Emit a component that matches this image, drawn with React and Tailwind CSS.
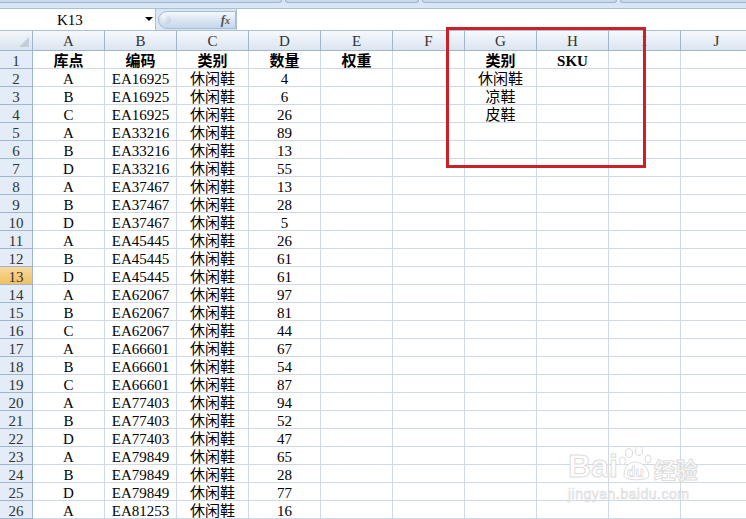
const rows = [
  ['A', 'EA16925', '休闲鞋', '4'],
  ['B', 'EA16925', '休闲鞋', '6'],
  ['C', 'EA16925', '休闲鞋', '26'],
  ['A', 'EA33216', '休闲鞋', '89'],
  ['B', 'EA33216', '休闲鞋', '13'],
  ['D', 'EA33216', '休闲鞋', '55'],
  ['A', 'EA37467', '休闲鞋', '13'],
  ['B', 'EA37467', '休闲鞋', '28'],
  ['D', 'EA37467', '休闲鞋', '5'],
  ['A', 'EA45445', '休闲鞋', '26'],
  ['B', 'EA45445', '休闲鞋', '61'],
  ['D', 'EA45445', '休闲鞋', '61'],
  ['A', 'EA62067', '休闲鞋', '97'],
  ['B', 'EA62067', '休闲鞋', '81'],
  ['C', 'EA62067', '休闲鞋', '44'],
  ['A', 'EA66601', '休闲鞋', '67'],
  ['B', 'EA66601', '休闲鞋', '54'],
  ['C', 'EA66601', '休闲鞋', '87'],
  ['A', 'EA77403', '休闲鞋', '94'],
  ['B', 'EA77403', '休闲鞋', '52'],
  ['D', 'EA77403', '休闲鞋', '47'],
  ['A', 'EA79849', '休闲鞋', '65'],
  ['B', 'EA79849', '休闲鞋', '28'],
  ['D', 'EA79849', '休闲鞋', '77'],
  ['A', 'EA81253', '休闲鞋', '16'],
]

const sideList = ['休闲鞋', '凉鞋', '皮鞋']
const cols = ['A', 'B', 'C', 'D', 'E', 'F', 'G', 'H', 'I', 'J']

function Cell({ children, bold }) {
  return (
    <div
      className={`h-[18px] pt-[3px] border-r border-b border-[#d0d7e5] flex items-center justify-center overflow-hidden whitespace-nowrap text-[15px] leading-none text-black ${bold ? 'font-bold' : ''}`}
    >
      {children}
    </div>
  )
}

function RowHead({ n }) {
  const sel = n === 13
  return (
    <div
      className={`h-[18px] pt-[3px] border-r border-b border-[#9eb6ce] flex items-center justify-center text-[15px] leading-none text-[#333] ${
        sel ? 'bg-gradient-to-b from-[#f9d99f] to-[#f1c15f]' : 'bg-[#e4ecf7]'
      }`}
    >
      {n}
    </div>
  )
}

function Row({ n, cells }) {
  const bold = n === 1
  return (
    <>
      <RowHead n={n} />
      {cells.map((v, j) => (
        <Cell key={j} bold={bold && v !== ''}>
          {v}
        </Cell>
      ))}
    </>
  )
}

export default function App() {
  const data = [
    ['库点', '编码', '类别', '数量', '权重', '', '类别', 'SKU', '', ''],
    ...rows.map((r, i) => [...r, '', '', sideList[i] || '', '', '', '']),
  ]

  return (
    <div
      className="relative w-[746px] h-[519px] overflow-hidden bg-white"
      style={{ fontFamily: '"Liberation Serif", "Noto Sans CJK SC", serif' }}
    >
      {/* ribbon bottom */}
      <div className="flex h-[9px] bg-[#dbe6f4] border-b border-[#a9bfd6]">
        <div className="flex w-full gap-[3px] h-[3px]">
          <div className="w-[282px] bg-[#c9d9ee] border-b border-r border-[#9db5d3] rounded-br-[3px]" />
          <div className="w-[134px] bg-[#c9d9ee] border-b border-x border-[#9db5d3] rounded-b-[3px]" />
          <div className="w-[195px] bg-[#c9d9ee] border-b border-x border-[#9db5d3] rounded-b-[3px]" />
          <div className="flex-1 bg-[#c9d9ee] border-b border-l border-[#9db5d3] rounded-bl-[3px]" />
        </div>
      </div>

      {/* formula bar */}
      <div className="flex h-[22px] bg-[#dbe6f4] border-b border-[#a9bfd6]">
        <div className="w-[156px] bg-white border-r border-[#a9bfd6] flex items-center relative">
          <span className="pl-[57px] pt-[2px] text-[15px] leading-none text-black">K13</span>
          <span className="absolute left-[145px] top-[8px] w-0 h-0 border-l-[4px] border-r-[4px] border-t-[4px] border-l-transparent border-r-transparent border-t-black" />
        </div>
        <div className="w-[80px] flex items-center pl-[2px]">
          <div className="relative w-full h-[18px] rounded-l-full bg-gradient-to-b from-[#f4f8fc] via-[#dbe6f3] to-[#c6d6ea] border border-[#a8bcd4] flex items-center justify-end pr-[5px]">
            <span className="absolute left-[3px] top-[3px] w-[9px] h-[9px] rounded-full bg-gradient-to-br from-[#ffffff] to-[#b7c8dc]" />
            <span className="text-[13px] italic font-bold text-[#555]">
              f<span className="text-[10px]">x</span>
            </span>
          </div>
        </div>
        <div className="flex-1 bg-white border-l border-[#a9bfd6]" />
      </div>

      {/* sheet grid */}
      <div className="grid grid-cols-[33px_repeat(10,72px)]">
        <div className="h-[20px] bg-gradient-to-b from-[#f4f7fb] to-[#d9e3ef] border-r border-b border-[#9eb6ce] relative">
          <span className="absolute right-[3px] bottom-[3px] w-0 h-0 border-b-[10px] border-l-[10px] border-b-[#c3cedc] border-l-transparent" />
        </div>
        {cols.map((c) => (
          <div
            key={c}
            className="h-[20px] pt-[2px] bg-gradient-to-b from-[#f6f9fc] to-[#dce5f0] border-r border-b border-[#9eb6ce] flex items-center justify-center text-[15px] leading-none text-[#333]"
          >
            {c}
          </div>
        ))}
        {data.map((r, i) => (
          <Row key={i} n={i + 1} cells={r} />
        ))}
      </div>

      {/* red highlight box */}
      <div className="absolute left-[446px] top-[27px] w-[200px] h-[141px] border-[3px] border-[#c92128]" />

      {/* watermark */}
      <div className="absolute left-[568px] top-[444px] w-[150px] pointer-events-none select-none" style={{ fontFamily: '"Liberation Sans", sans-serif' }}>
        <div className="flex items-end h-[38px]">
          <span className="text-[32px] font-bold leading-none text-white" style={{ WebkitTextStroke: '1px #dcdcdc' }}>Bai</span>
          <span className="relative w-[36px] h-[36px]">
            <svg width="36" height="36" viewBox="0 0 36 36" className="absolute left-0 top-0">
              <g fill="#fff" stroke="#dcdcdc" strokeWidth="1">
                <ellipse cx="11" cy="7" rx="3.5" ry="4.5" />
                <ellipse cx="21" cy="5" rx="3.5" ry="4.5" />
                <ellipse cx="4.5" cy="15" rx="3" ry="4" />
                <ellipse cx="30" cy="13" rx="3" ry="4" />
                <path d="M6 30 C6 20 12 16 17 16 C23 16 31 21 31 30 C31 35 6 35 6 30 Z" />
              </g>
            </svg>
            <span className="absolute left-[9px] top-[19px] text-[14px] font-bold leading-none text-white" style={{ WebkitTextStroke: '0.6px #d4d4d4' }}>du</span>
          </span>
          <span className="text-[22px] font-bold leading-none text-white mb-[3px]" style={{ fontFamily: '"Noto Sans CJK SC", sans-serif', WebkitTextStroke: '1px #dcdcdc' }}>经验</span>
        </div>
        <div className="mt-[5px] text-[14px] leading-none text-white tracking-[0.5px]" style={{ WebkitTextStroke: '0.6px #d6d6d6' }}>
          jingyan.baidu.com
        </div>
      </div>
    </div>
  )
}
